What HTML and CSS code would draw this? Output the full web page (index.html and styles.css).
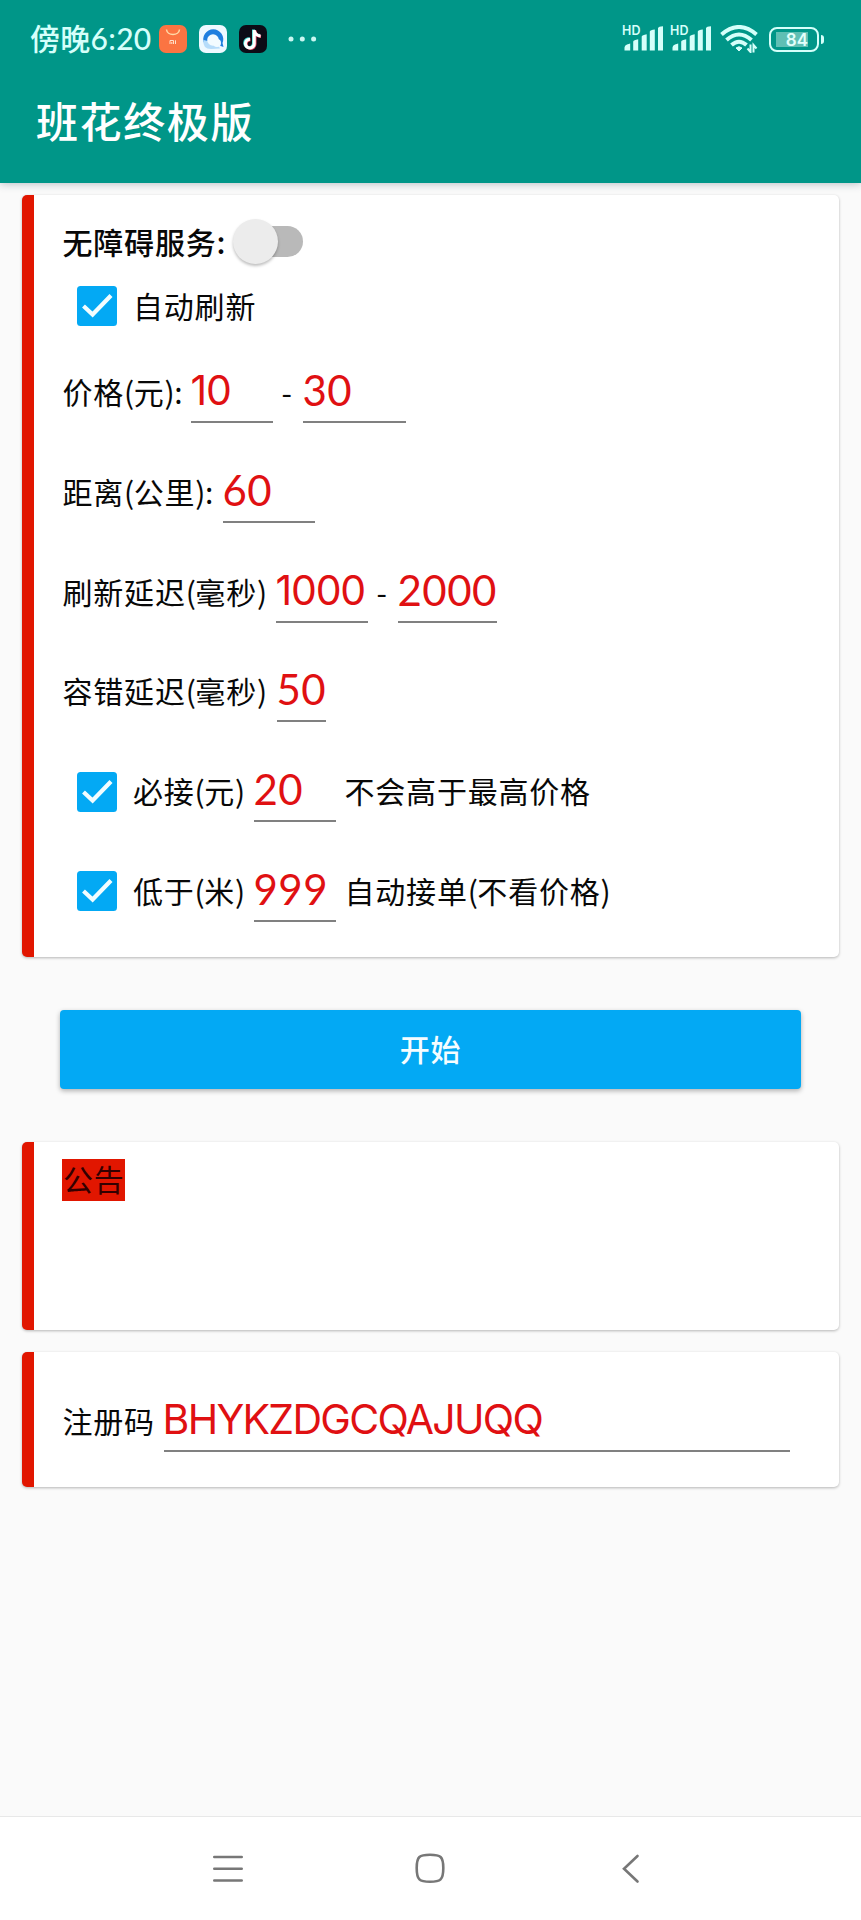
FILE: index.html
```html
<!DOCTYPE html>
<html lang="zh-CN">
<head>
<meta charset="utf-8">
<title>班花终极版</title>
<link rel="stylesheet" href="styles.css">
</head>
<body>
<svg class="defs" width="0" height="0">
  <symbol id="tick" viewBox="0 0 40 40"><rect width="40" height="40" rx="3.5" fill="#03a9f4"/><path d="M6.5 20 L15.600 28.500 L34 9.500" fill="none" stroke="#f2fdff" stroke-width="4.200"/></symbol>
  <symbol id="signal" viewBox="0 0 40 28"><path d="M1.5 25.5 V22.5 Q1.5 20.5 4 19.6 L7.2 18.5 V25.5 Z M10.2 25.5 V16.5 Q10.7 15.3 15.2 14.3 V25.5 Z M18.7 25.5 V11.5 Q19.2 10 23.7 9.3 V25.5 Z M26.800 25.5 V6.5 Q27.3 5 31.800 4.5 V25.5 Z M35 25.5 V3 Q35.5 1.5 40 1.2 V25.5 Z" fill="#d5fffa"/></symbol>
</svg>
<header class="top">
  <div class="status">
    <span class="clock">傍晚6:20</span>
    <svg class="app" viewBox="0 0 28 28"><rect width="28" height="28" rx="7" fill="#fb7442"/><path d="M7.5 4.5 C8 11 20 11 20.500 4.500" fill="none" stroke="#ffd9a8" stroke-width="1.500"/><path d="M11 19 V15.500 H14.500 V19 M12.800 17 V19 M16.500 15.300 V19" fill="none" stroke="#ffe1cc" stroke-width="1"/></svg>
    <svg class="app" viewBox="0 0 28 28"><rect width="28" height="28" rx="7" fill="#eef9ff"/><path d="M5 18 A10 10 0 1 1 23.500 18 L24.500 22 L19 20 Z" fill="#1f7fdf"/><path d="M4.500 15 Q3.500 24 12 24 L21 23.500 L18 18 Z" fill="#b6dcfa"/><circle cx="14" cy="15" r="5.800" fill="#f3fbff"/><circle cx="18" cy="18" r="4" fill="#f3fbff"/></svg>
    <svg class="app" viewBox="0 0 28 28"><rect width="28" height="28" rx="7" fill="#0c0b16"/><g fill="none" stroke-width="3"><path d="M14.500 4.500 V18 A4.400 4.400 0 1 1 10.500 13.700 M14.500 5 Q15.500 10 21 10.500" stroke="#42ddd8"/><path d="M16 5.500 V19 A4.400 4.400 0 1 1 11.500 14.700 M16 6 Q17 11 22 11.500" stroke="#ef5470"/><path d="M15.200 5 V18.500 A4.400 4.400 0 1 1 11 14.200 M15.200 5.500 Q16.200 10.500 21.500 11" stroke="#fff"/></g></svg>
    <svg class="more" viewBox="0 0 30 6" fill="#c9f7f2"><circle cx="3" cy="3" r="2.500"/><circle cx="14.300" cy="3" r="2.500"/><circle cx="25.600" cy="3" r="2.500"/></svg>
    <div class="sim sim-first"><span class="hd">HD</span><svg class="bars"><use href="#signal"/></svg></div>
    <div class="sim"><span class="hd">HD</span><svg class="bars"><use href="#signal"/></svg></div>
    <svg class="wifi" viewBox="0 0 38 28"><g fill="none" stroke="#d5fffa" stroke-width="4"><path d="M1.500 9.500 Q19 -5.500 36.500 9.500"/><path d="M6.500 15 Q19 4 31.500 15"/><path d="M11.500 20 Q19 13.500 26.500 20"/></g><path d="M16 23 Q19 20.500 22 23 L19 26 Z" fill="#d5fffa" stroke="#d5fffa"/><path d="M30.500 19.500 V27 L27.500 23.500 M33.500 27.500 V20 L36.500 23.500" fill="none" stroke="#d5fffa" stroke-width="2"/></svg>
    <div class="battery"><span class="level">84</span></div>
    <i class="cap"></i>
  </div>
  <h1 class="title">班花终极版</h1>
</header>
<main class="content">
  <section class="card settings">
    <div class="line service"><b class="text strong">无障碍服务:</b><span class="switch"><i class="thumb"></i></span></div>
    <div class="line auto"><svg class="check"><use href="#tick"/></svg><span class="text">自动刷新</span></div>
    <div class="line row"><span class="text price">价格<i class="paren">(</i>元<i class="paren">):</i></span><span class="field w82 one">10</span><span class="text dash wide">-</span><span class="field w103">30</span></div>
    <div class="line row"><span class="text distance">距离<i class="paren">(</i>公里<i class="paren">):</i></span><span class="field w92">60</span></div>
    <div class="line row"><span class="text delay">刷新延迟<i class="paren">(</i>毫秒<i class="paren">)</i></span><span class="field w92 one">1000</span><span class="text dash">-</span><span class="field w99">2000</span></div>
    <div class="line row"><span class="text delay">容错延迟<i class="paren">(</i>毫秒<i class="paren">)</i></span><span class="field w49">50</span></div>
    <div class="line row"><svg class="check"><use href="#tick"/></svg><span class="text must">必接<i class="paren">(</i>元<i class="paren">)</i></span><span class="field w82">20</span><span class="text note">不会高于最高价格</span></div>
    <div class="line row"><svg class="check"><use href="#tick"/></svg><span class="text must">低于<i class="paren">(</i>米<i class="paren">)</i></span><span class="field w82">999</span><span class="text note">自动接单<i class="paren">(</i>不看价格<i class="paren">)</i></span></div>
  </section>
  <button class="start">开始</button>
  <section class="card notice"><span class="tag">公告</span></section>
  <section class="card register"><div class="line row"><span class="text code">注册码</span><span class="field key">BHYKZDGCQAJUQQ</span></div></section>
</main>
<nav class="nav">
  <svg viewBox="0 0 32 32"><path d="M2.300 4 H29.700 M2.300 15.700 H29.700 M2.300 27.500 H29.700"/></svg>
  <svg viewBox="0 0 32 32"><path d="M16 1.700 C26.500 1.700 29.300 3.500 29.300 15 C29.300 27 26.500 28.800 16 28.800 C5.500 28.800 2.700 27 2.700 15 C2.700 3.500 5.500 1.700 16 1.700 Z"/></svg>
  <svg viewBox="0 0 32 32"><path d="M22.500 3 L9 15.700 L22.500 28.500"/></svg>
</nav>
</body>
</html>
```
FILE: styles.css
```css
* { box-sizing: border-box; }
body { margin: 0; width: 861px; height: 1920px; display: flex; flex-direction: column; background: #fafafa; color: #080808; font: 30px/42px "Noto Sans CJK SC", sans-serif; letter-spacing: .8px; overflow: hidden; }
svg { flex: none; display: block; }
.defs { position: absolute; }
.top { height: 183px; flex: none; background: #009688; box-shadow: 0 1px 8px rgba(40, 60, 80, .3); color: #fff; position: relative; }
.status { height: 78px; display: flex; align-items: center; padding-left: 30px; color: #d5fffa; }
.clock { width: 129px; padding-bottom: 2px; font: 500 30px/40px Lato, "Noto Sans CJK SC", sans-serif; letter-spacing: .3px; white-space: nowrap; }
.app { width: 28px; height: 28px; margin-right: 12px; }
.more { width: 30px; height: 6px; margin-left: 9px; }
.sim { width: 40px; height: 28px; margin-right: 8px; position: relative; }
.sim-first { margin-left: 305px; }
.bars { width: 40px; height: 28px; }
.hd { position: absolute; left: -1px; top: -1px; font: 600 12.5px/14px Inter, sans-serif; letter-spacing: .2px; }
.wifi { width: 38px; height: 28px; margin-left: 1px; }
.battery { width: 50px; height: 25px; margin-left: 11px; border: 2px solid #d5fffa; border-radius: 8px; padding: 3px 9px 3px 5px; }
.level { display: block; height: 15px; background: #5fbfb4; font: 600 17px/16px Inter, sans-serif; letter-spacing: 0; text-align: right; color: #e2fffb; }
.cap { width: 3px; height: 9px; margin-left: 2px; border-radius: 0 3px 3px 0; background: #d5fffa; }
.title { margin: 12px 0 0 36px; font-size: 42px; line-height: 60px; font-weight: 500; letter-spacing: 1.6px; }
.content { flex: 1; padding: 12px 22px 0; }
.card { border-left: 12px solid #e11600; border-radius: 5px; background: #fff; box-shadow: 0 1px 3px rgba(0, 0, 0, .28); padding-left: 28.5px; }
.settings { height: 762px; padding-top: 16px; }
.line { display: flex; align-items: center; white-space: nowrap; }
.text { flex: none; padding-bottom: 3px; }
.paren { font-style: normal; letter-spacing: -.5px; }
.service { height: 62px; }
.strong { width: 170px; font-weight: 500; }
.switch { width: 71px; height: 46px; padding: 7px 1px 0 7px; position: relative; }
.switch::before { content: ""; display: block; width: 63px; height: 31px; border-radius: 16px; background: #b9b9b9; }
.thumb { position: absolute; left: 0; top: 0; width: 45px; height: 45px; border-radius: 50%; background: #ececec; box-shadow: 0 2px 3px rgba(0, 0, 0, .25); }
.auto { height: 66px; margin-bottom: 4px; }
.check { width: 40px; height: 40px; margin: 0 16px 0 14.5px; }
.row { height: 99.7px; }
.price { width: 129px; }
.distance { width: 160px; }
.delay { width: 214px; }
.must { width: 120.5px; }
.code { width: 101px; }
.field { height: 61px; flex: none; border-bottom: 2px solid #808080; color: #e01012; font: 42px/56px Lato, sans-serif; letter-spacing: .5px; }
.one { font: 41px/56px Inter, sans-serif; letter-spacing: -1.2px; margin-left: -1px; margin-right: 1px; }
.w82 { width: 82px; }
.w103 { width: 103px; }
.w92 { width: 92px; }
.w99 { width: 99px; }
.w49 { width: 49px; }
.dash { width: 29px; padding-left: 8px; }
.note { margin-left: 9px; }
.start { display: block; width: 741px; height: 79px; margin: 53px 0 53px 38px; padding: 0 0 4px; border: 0; border-radius: 4px; background: #03a9f4; box-shadow: 0 2px 5px rgba(0, 0, 0, .3); color: #f5fdff; font: 500 30px/42px "Noto Sans CJK SC", sans-serif; letter-spacing: .8px; }
.notice { height: 188px; padding: 17px 0 0 28px; }
.tag { display: block; width: 63px; height: 42px; background: #e11600; color: #300; padding-left: 1px; line-height: 39px; }
.register { height: 135px; margin-top: 22px; padding-top: 20px; }
.key { width: 626px; font: 41px/56px Inter, sans-serif; letter-spacing: -1.7px; text-indent: -1px; }
.nav { height: 104px; flex: none; border-top: 1px solid #e8e8e8; background: #fff; display: flex; justify-content: center; gap: 169.5px; padding: 36px 2px 0 0; }
.nav svg { width: 32px; height: 32px; fill: none; stroke: #777; stroke-width: 2.6; stroke-linecap: round; }
```
